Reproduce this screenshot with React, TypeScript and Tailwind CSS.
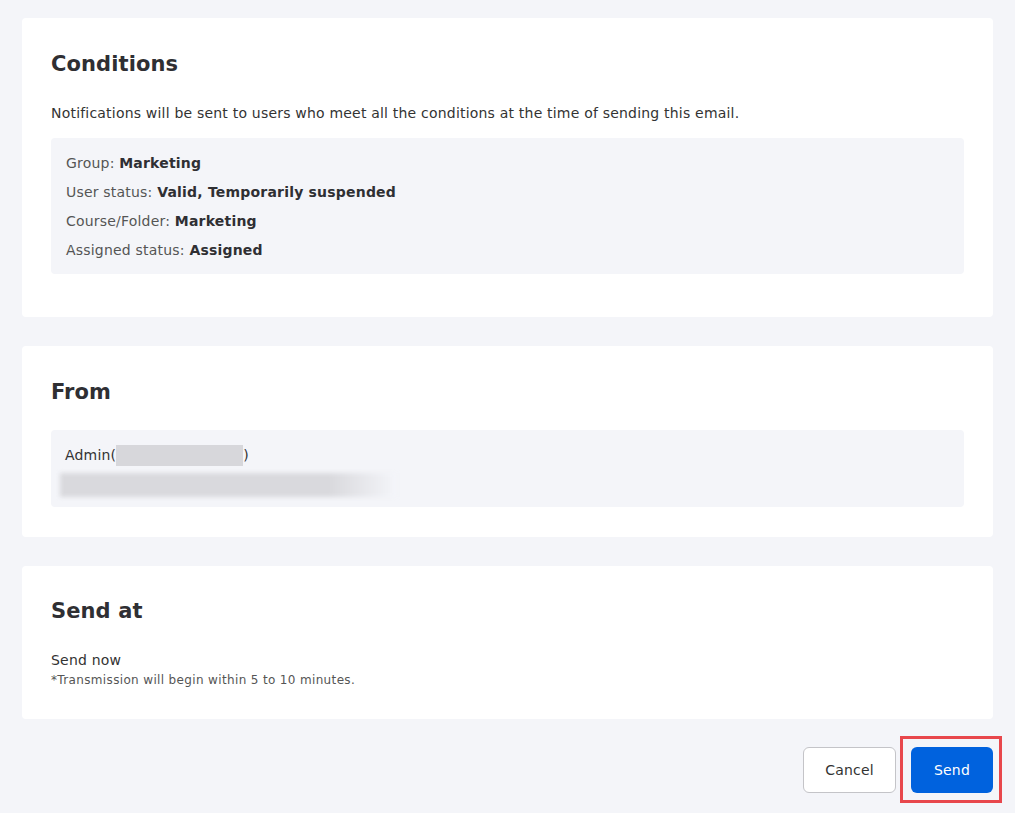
import { type ReactNode } from 'react'

type Condition = {
  label: string
  value: string
}

const conditions: Condition[] = [
  { label: 'Group', value: 'Marketing' },
  { label: 'User status', value: 'Valid, Temporarily suspended' },
  { label: 'Course/Folder', value: 'Marketing' },
  { label: 'Assigned status', value: 'Assigned' },
]

function Card({ title, className, children }: { title: string; className?: string; children: ReactNode }) {
  return (
    <section className={`rounded-[4px] bg-white px-[29px] ${className ?? ''}`}>
      <h2 className="text-[21px] font-bold leading-none tracking-[0.1px] text-[#2f2f33]">{title}</h2>
      {children}
    </section>
  )
}

export default function App() {
  return (
    <div
      className="min-h-screen bg-[#f4f5f9] px-[22px] pt-[18px] pb-[12px] text-[14px] tracking-[0.2px] text-[#333]"
      style={{ fontFamily: '"DejaVu Sans", Verdana, sans-serif' }}
    >
      <div className="flex flex-col gap-[29px]">
        <Card title="Conditions" className="pt-[36px] pb-[43px]">
          <p className="mt-[28px] leading-[20px] text-[#333]">
            Notifications will be sent to users who meet all the conditions at the time of sending this email.
          </p>
          <div className="mt-[15px] rounded-[4px] bg-[#f4f5f9] px-[15px] pt-[11px] pb-[9px]">
            {conditions.map((condition) => (
              <div key={condition.label} className="leading-[29px]">
                <span className="text-[#555]">{condition.label}: </span>
                <span className="font-bold text-[#2f2f33]">{condition.value}</span>
              </div>
            ))}
          </div>
        </Card>

        <Card title="From" className="pt-[36px] pb-[30px]">
          <div className="mt-[27px] rounded-[4px] bg-[#f4f5f9] px-[14px] pt-[13px] pb-[10px]">
            <div className="flex items-center leading-[24px] text-[#333]">
              <span>Admin(</span>
              <span className="h-[21px] w-[127px] bg-[#d7d7db]" />
              <span>)</span>
            </div>
            <div className="-ml-[5px] mt-[6px] h-[24px] w-[336px] bg-gradient-to-r from-[#d9d9dd] via-[#d9d9dd] via-80% to-[#f4f5f9] blur-[2px]" />
          </div>
        </Card>

        <Card title="Send at" className="pt-[35px] pb-[29px]">
          <div className="mt-[28px]">
            <p className="leading-[20px] text-[#333]">Send now</p>
            <p className="text-[12px] leading-[20px] tracking-[0.35px] text-[#555]">
              *Transmission will begin within 5 to 10 minutes.
            </p>
          </div>
        </Card>
      </div>

      <div className="mt-[28px] flex items-start justify-end gap-[4px]">
        <button
          type="button"
          className="h-[46px] w-[93px] rounded-[6px] border border-[#c4c4c8] bg-white text-[14px] tracking-[0.2px] text-[#333]"
        >
          Cancel
        </button>
        <div className="-mt-[11px] -mr-[9px] border-[3px] border-[#e8474c] pt-[8px] pr-[6px] pb-[7px] pl-[8px]">
          <button
            type="button"
            className="block h-[46px] w-[82px] rounded-[6px] bg-[#0062de] text-[14px] tracking-[0.2px] text-white"
          >
            Send
          </button>
        </div>
      </div>
    </div>
  )
}
